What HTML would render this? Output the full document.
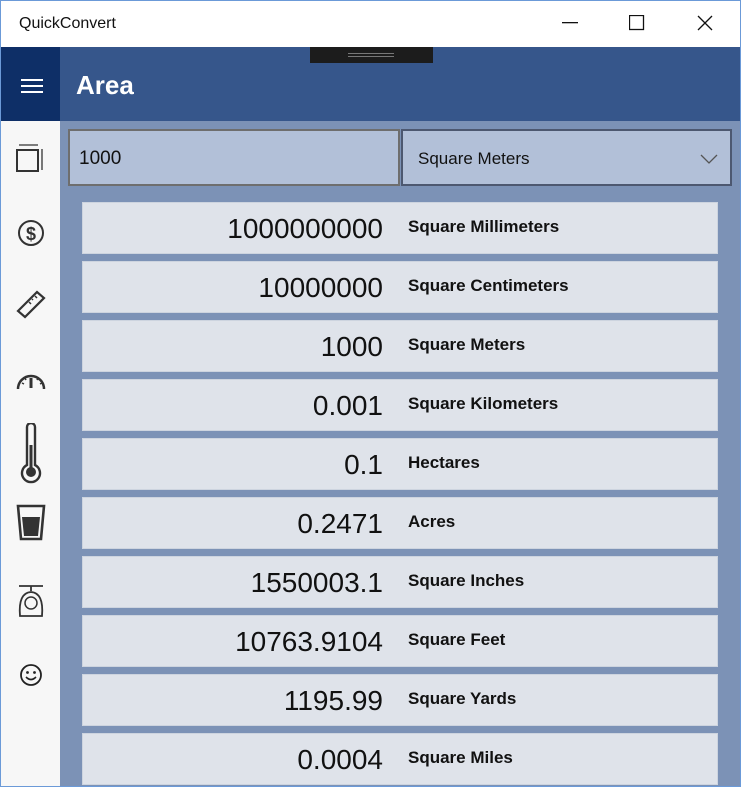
<!DOCTYPE html>
<html><head><style>
*{margin:0;padding:0;box-sizing:border-box}
body{width:741px;height:787px;overflow:hidden;font-family:"Liberation Sans",sans-serif;background:#7c92b6;position:relative}
.frame{position:absolute;inset:0;border:1px solid #6b9ad8;pointer-events:none;z-index:9}
.title{position:absolute;left:0;top:0;width:741px;height:47px;background:#fff;}
.title span{position:absolute;left:19px;top:15px;font-size:16px;color:#111}
.hdr{position:absolute;left:0;top:47px;width:741px;height:74px;background:#36568b}
.ham{position:absolute;left:0;top:47px;width:60px;height:74px;background:#0e2f67}
.ham i{position:absolute;left:21px;width:22px;height:2px;background:#fff}
.area{position:absolute;left:76px;top:70px;color:#fff;font-size:26px;font-weight:bold}
.grip{position:absolute;left:310px;top:47px;width:123px;height:16px;background:#1c1c1c}
.grip i{position:absolute;left:38px;width:46px;height:1px;background:#777}
.side{position:absolute;left:0;top:121px;width:60px;height:666px;background:#f7f7f7}
.in{position:absolute;top:129px;height:57px;background:#b2c0d8;border:2px solid #6e6e6e;font-size:19px;color:#111;padding:17px 9px}
.row{position:absolute;left:82px;width:636px;height:52px;background:#dfe3ea;border:1px solid #cdd4df}
.row .n{position:absolute;right:334px;top:10px;font-size:28px;color:#111}
.row .l{position:absolute;left:325px;top:14px;font-size:17px;font-weight:bold;color:#111}
svg{position:absolute}
</style></head><body>
<div class="title"><span>QuickConvert</span>
<svg style="left:562px;top:22px" width="16" height="2"><rect width="16" height="1.3" fill="#111"/></svg>
<svg style="left:629px;top:15px" width="16" height="16"><rect x=".5" y=".5" width="14" height="14" fill="none" stroke="#111" stroke-width="1.3"/></svg>
<svg style="left:697px;top:15px" width="16" height="16"><path d="M1 1L15 15M15 1L1 15" stroke="#111" stroke-width="1.3"/></svg>
</div>
<div class="hdr"></div>
<div class="ham"><i style="top:32px"></i><i style="top:38px"></i><i style="top:44px"></i></div>
<div class="grip"><i style="top:6px"></i><i style="top:9px"></i></div>
<div class="area">Area</div>
<div class="side">
<svg style="left:14px;top:20px" width="34" height="34" viewBox="0 0 34 34" fill="none" stroke="#333" stroke-width="2"><rect x="3" y="9" width="21" height="21"/><path d="M5 4H24M28 8V29" stroke-width="1.3"/></svg>
<svg style="left:15px;top:96px" width="32" height="32" viewBox="0 0 32 32"><circle cx="16" cy="16" r="12" fill="none" stroke="#333" stroke-width="2"/><text x="16" y="23" font-size="18" font-weight="bold" text-anchor="middle" fill="#333" font-family="Liberation Sans">$</text></svg>
<svg style="left:15px;top:164px" width="32" height="34" viewBox="0 0 32 34"><path d="M3 26L22 7L29 13L10 32Z" fill="none" stroke="#333" stroke-width="2.2"/><path d="M20 11L22 13M17 14L18 15M14 17L16 19" stroke="#333" stroke-width="1.5"/></svg>
<svg style="left:15px;top:245px" width="32" height="26" viewBox="0 0 32 26"><path d="M3 23A13 13 0 0 1 29 23" fill="none" stroke="#333" stroke-width="2.5"/><path d="M16 12V22" stroke="#333" stroke-width="3"/><path d="M7 17L9 18M10 12L11 14M22 14L23 12M25 18L27 17" stroke="#333" stroke-width="1.5"/></svg>
<svg style="left:18px;top:302px" width="26" height="62" viewBox="0 0 26 62"><path d="M9 4A4 4 0 0 1 17 4V42A9 9 0 1 1 9 42Z" fill="none" stroke="#333" stroke-width="2.4"/><rect x="11.5" y="22" width="3" height="26" fill="#333"/><circle cx="13" cy="49" r="5" fill="#333"/></svg>
<svg style="left:16px;top:383px" width="30" height="38" viewBox="0 0 30 38"><path d="M2 2H28L25 35H5Z" fill="none" stroke="#333" stroke-width="2.6"/><path d="M6 13H24L22 32H8Z" fill="#333"/></svg>
<svg style="left:16px;top:462px" width="30" height="36" viewBox="0 0 30 36"><path d="M3 3H27M15 3V8" stroke="#333" stroke-width="1.8"/><path d="M4 33Q2 10 15 9Q28 10 26 33Z" fill="none" stroke="#333" stroke-width="1.8"/><circle cx="15" cy="20" r="6" fill="none" stroke="#333" stroke-width="1.5"/></svg>
<svg style="left:19px;top:542px" width="24" height="24" viewBox="0 0 24 24"><circle cx="12" cy="12" r="10" fill="none" stroke="#222" stroke-width="1.8"/><circle cx="8.5" cy="9.5" r="1.4" fill="#222"/><circle cx="15.5" cy="9.5" r="1.4" fill="#222"/><path d="M7 14Q12 19 17 14" fill="none" stroke="#222" stroke-width="1.6"/></svg>
</div>
<div class="in" style="left:68px;width:332px">1000</div>
<div class="in" style="left:401px;width:331px;border-color:#4d5870;font-size:17px;padding-top:18px;padding-left:15px">Square Meters
<svg style="right:12px;top:23px" width="18" height="10"><path d="M1 1L9 9L17 1" fill="none" stroke="#555" stroke-width="1.3"/></svg></div>
<div class="row" style="top:202px"><span class="n">1000000000</span><span class="l">Square Millimeters</span></div>
<div class="row" style="top:261px"><span class="n">10000000</span><span class="l">Square Centimeters</span></div>
<div class="row" style="top:320px"><span class="n">1000</span><span class="l">Square Meters</span></div>
<div class="row" style="top:379px"><span class="n">0.001</span><span class="l">Square Kilometers</span></div>
<div class="row" style="top:438px"><span class="n">0.1</span><span class="l">Hectares</span></div>
<div class="row" style="top:497px"><span class="n">0.2471</span><span class="l">Acres</span></div>
<div class="row" style="top:556px"><span class="n">1550003.1</span><span class="l">Square Inches</span></div>
<div class="row" style="top:615px"><span class="n">10763.9104</span><span class="l">Square Feet</span></div>
<div class="row" style="top:674px"><span class="n">1195.99</span><span class="l">Square Yards</span></div>
<div class="row" style="top:733px"><span class="n">0.0004</span><span class="l">Square Miles</span></div>
<div class="frame"></div>
</body></html>
